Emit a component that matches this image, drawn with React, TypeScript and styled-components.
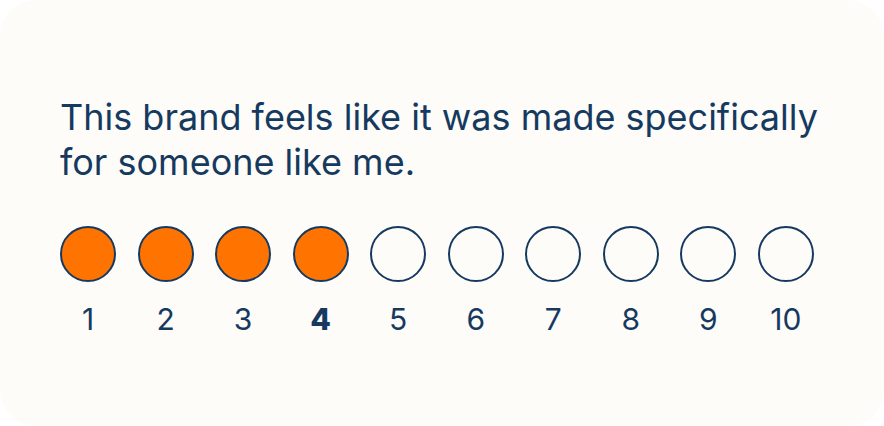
import React from "react";
import styled, { createGlobalStyle } from "styled-components";

const GlobalStyle = createGlobalStyle`
    html, body {
        margin: 0;
        padding: 0;
        background: #ffffff;
    }
    body {
        font-family: Inter, "Noto Sans", sans-serif;
    }
`;

const SELECTED = 4;
const values = [1, 2, 3, 4, 5, 6, 7, 8, 9, 10];

const App = () => {
    return (
        <>
            <GlobalStyle />
            <Card>
                <Question>
                    This brand feels like it was made specifically
                    <br />
                    for someone like me.
                </Question>
                <Scale>
                    {values.map((v) => (
                        <Option key={v}>
                            <Dot $filled={v <= SELECTED} />
                            <Label $active={v === SELECTED}>{v}</Label>
                        </Option>
                    ))}
                </Scale>
            </Card>
        </>
    );
};

export default App;

const Card = styled.div`
    box-sizing: border-box;
    width: 884px;
    height: 426px;
    padding: 95px 62px 0 60px;
    display: flex;
    flex-direction: column;

    background: #fdfcf9;
    border-radius: 36px;
`;

const Question = styled.p`
    margin: 0;
    font-size: 36px;
    line-height: 45px;
    font-weight: 400;
    color: #163a5f;
`;

const Scale = styled.div`
    margin-top: 41px;
    display: flex;
    justify-content: space-between;
    width: 754px;
`;

const Option = styled.div`
    display: flex;
    flex-direction: column;
    align-items: center;
    gap: 21px;
`;

const Dot = styled.div<{ $filled: boolean }>`
    box-sizing: border-box;
    width: 56px;
    height: 56px;
    border-radius: 50%;
    border: 2px solid #163a5f;
    background: ${(p) => (p.$filled ? "#ff7300" : "transparent")};
`;

const Label = styled.span<{ $active: boolean }>`
    font-size: 30px;
    line-height: 32px;
    font-weight: ${(p) => (p.$active ? 800 : 400)};
    color: #163a5f;
`;
